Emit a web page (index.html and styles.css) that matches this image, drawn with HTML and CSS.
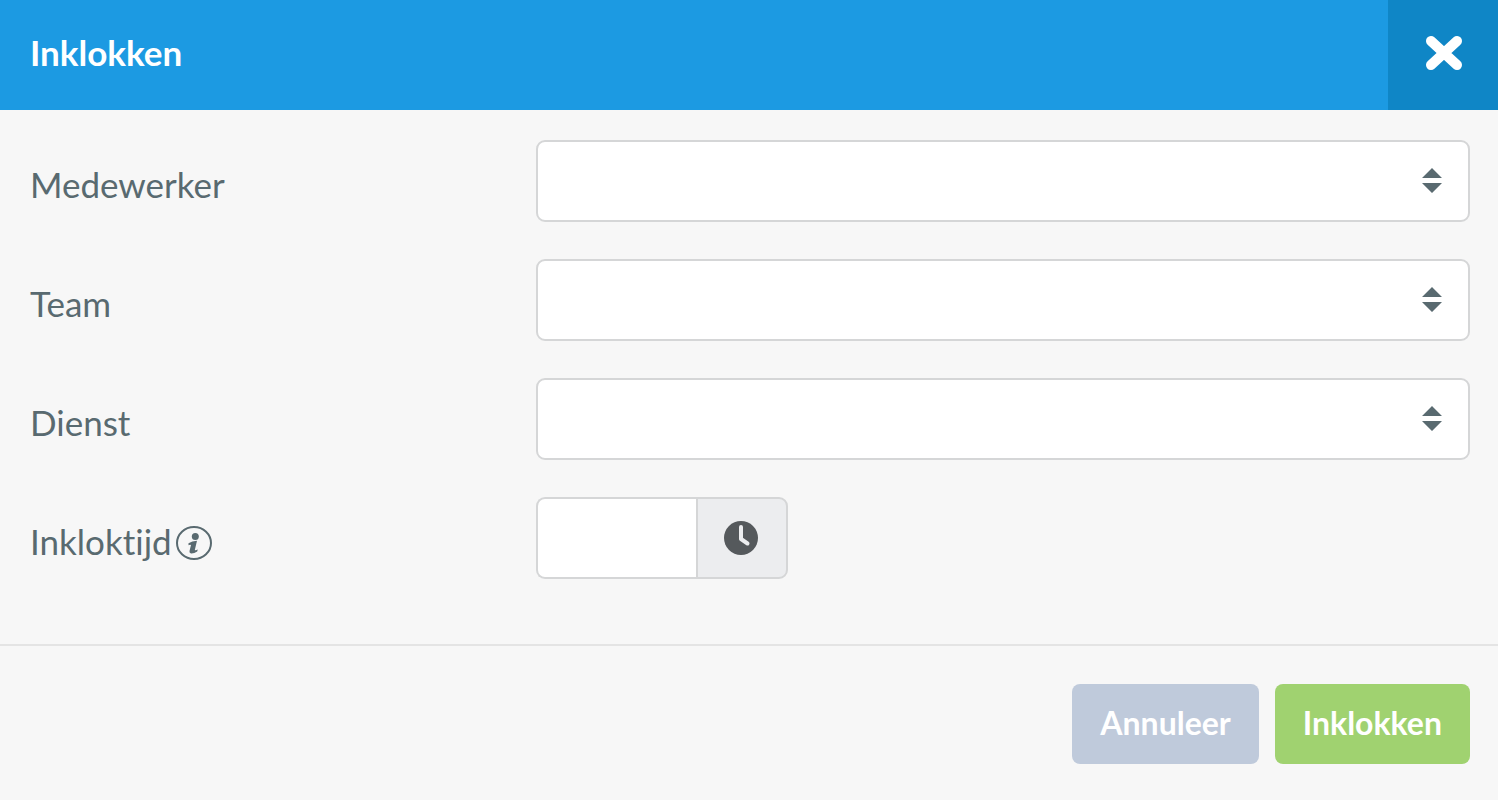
FILE: index.html
```html
<!DOCTYPE html>
<html lang="nl">
<head>
    <meta charset="UTF-8">
    <meta name="viewport" content="width=device-width, initial-scale=1.0">
    <title>Inklokken</title>
    <link rel="stylesheet" href="styles.css">
</head>
<body>
    <div class="modal">
        <header class="modal-header">
            <h1>Inklokken</h1>
            <button type="button" class="close" aria-label="Sluiten">
                <svg width="38" height="36" viewBox="0 0 38 36"><path d="M6 6L32 30M32 6L6 30" stroke="#fff" stroke-width="10" stroke-linecap="round"/></svg>
            </button>
        </header>

        <form id="clockForm" class="modal-body">
            <div class="row">
                <label for="employee">Medewerker</label>
                <div class="select">
                    <select id="employee"><option></option></select>
                    <svg class="arrows" width="20" height="26" viewBox="0 0 20 26"><path d="M0 10L10 0L20 10ZM0 15L10 25L20 15Z"/></svg>
                </div>
            </div>
            <div class="row">
                <label for="team">Team</label>
                <div class="select">
                    <select id="team"><option></option></select>
                    <svg class="arrows" width="20" height="26" viewBox="0 0 20 26"><path d="M0 10L10 0L20 10ZM0 15L10 25L20 15Z"/></svg>
                </div>
            </div>
            <div class="row">
                <label for="shift">Dienst</label>
                <div class="select">
                    <select id="shift"><option></option></select>
                    <svg class="arrows" width="20" height="26" viewBox="0 0 20 26"><path d="M0 10L10 0L20 10ZM0 15L10 25L20 15Z"/></svg>
                </div>
            </div>
            <div class="row">
                <label for="time">Inkloktijd
                    <svg class="info" width="36" height="34" viewBox="0 0 36 34">
                        <ellipse cx="18" cy="17" rx="17" ry="16" fill="none" stroke="#596a70" stroke-width="2"/>
                        <circle cx="19.300" cy="10.500" r="3.500"/>
                        <path d="M12.500 17.300Q16 15 21 14.800L18.800 24Q19.500 24.700 21.800 23.500L21.200 25.400Q18 27.600 15 27.400Q13 27 13.500 25L15 19Q14 18.500 12.500 19.200Z"/>
                    </svg>
                </label>
                <div class="time">
                    <input type="text" id="time">
                    <button type="button" aria-label="Kies tijd">
                        <svg width="34" height="34" viewBox="0 0 34 34"><circle cx="17" cy="17" r="17" fill="#55595c"/><path d="M17 6V18L23.500 22.500" fill="none" stroke="#ecedef" stroke-width="4" stroke-linecap="round" stroke-linejoin="round"/></svg>
                    </button>
                </div>
            </div>
        </form>

        <footer class="modal-footer">
            <button type="button" class="btn btn-cancel">Annuleer</button>
            <button type="submit" form="clockForm" class="btn btn-submit">Inklokken</button>
        </footer>
    </div>
</body>
</html>
```
FILE: styles.css
```css
* {
    box-sizing: border-box;
}
body {
    margin: 0;
    background: #f7f7f7;
    color: #596a70;
    font-family: Lato, "Open Sans", sans-serif;
    font-size: 35px;
    font-variant-ligatures: none;
}
button, input, select {
    font: inherit;
    color: inherit;
}
svg {
    display: block;
    fill: #596a70;
}
.modal-header {
    display: flex;
    justify-content: space-between;
    height: 110px;
    background: #1c9ae2;
    color: #fff;
}
.modal-header h1 {
    margin: 0;
    padding-left: 30px;
    font-size: 35px;
    font-weight: 700;
    line-height: 104px;
}
.close {
    display: flex;
    align-items: center;
    justify-content: center;
    width: 110px;
    padding: 0 0 4px 2px;
    border: 0;
    background: #0f86c6;
    cursor: pointer;
}
.modal-body {
    display: grid;
    gap: 37px;
    padding: 30px 28px 65px 30px;
}
.row {
    display: grid;
    grid-template-columns: 13fr 24fr;
    align-items: center;
}
.row label {
    display: flex;
    align-items: center;
    gap: 4px;
    padding-top: 5px;
}
.info {
    margin-top: 4px;
}
.select {
    position: relative;
}
.select select {
    display: block;
    width: 100%;
    height: 82px;
    padding: 0 60px 0 20px;
    border: 2px solid #d5d6d7;
    border-radius: 9px;
    background: #fff;
    appearance: none;
}
.arrows {
    position: absolute;
    top: 28px;
    right: 28px;
    pointer-events: none;
}
.time {
    display: flex;
    height: 82px;
}
.time input {
    width: 160px;
    padding: 0 20px;
    border: 2px solid #d5d6d7;
    border-right: 0;
    border-radius: 9px 0 0 9px;
    background: #fff;
}
.time button {
    display: flex;
    align-items: center;
    justify-content: center;
    width: 92px;
    padding: 0 2px 0 0;
    border: 2px solid #d5d6d7;
    border-radius: 0 9px 9px 0;
    background: #ecedef;
    cursor: pointer;
}
.modal-footer {
    display: flex;
    justify-content: flex-end;
    gap: 16px;
    padding: 38px 28px 36px;
    border-top: 2px solid #e4e4e4;
}
.btn {
    height: 80px;
    padding: 0 28px 4px;
    border: 0;
    border-radius: 8px;
    color: #fff;
    font-size: 32px;
    font-weight: 700;
    cursor: pointer;
}
.btn-cancel {
    background: #bfcadb;
}
.btn-submit {
    background: #a0d270;
}
```
